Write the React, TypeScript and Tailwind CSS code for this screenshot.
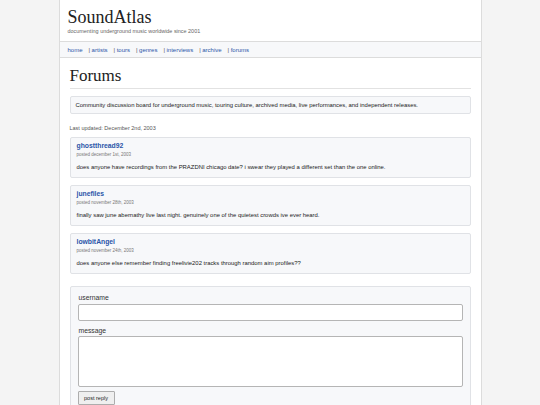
import React from "react";

const posts = [
  {
    user: "ghostthread92",
    date: "posted december 1st, 2003",
    body: "does anyone have recordings from the PRAZDNI chicago date? i swear they played a different set than the one online.",
  },
  {
    user: "junefiles",
    date: "posted november 28th, 2003",
    body: "finally saw june abernathy live last night. genuinely one of the quietest crowds ive ever heard.",
  },
  {
    user: "lowbitAngel",
    date: "posted november 24th, 2003",
    body: "does anyone else remember finding freelivie202 tracks through random aim profiles??",
  },
];

const navLinks = ["artists", "tours", "genres", "interviews", "archive", "forums"];

export default function App() {
  return (
    <div className="min-h-screen bg-[#f4f4f4] font-['Liberation_Sans',Arial,sans-serif] text-[#222]">
      <div className="mx-auto w-[423px] min-h-[405px] bg-white border-x border-[#dcdcdc]">
        {/* Header */}
        <header className="h-[42px] border-b border-[#dcdcdc] pl-[8px] pt-[8px]">
          <h1 className="font-['Liberation_Serif','Times_New_Roman',serif] text-[18px] leading-[18px] text-[#222]">
            SoundAtlas
          </h1>
          <p className="mt-[2px] text-[5.45px] leading-[7px] text-[#666]">
            documenting underground music worldwide since 2001
          </p>
        </header>

        {/* Nav */}
        <nav className="flex h-[16px] items-center gap-[6px] border-b border-[#dcdcdc] bg-[#f7f8fa] pl-[8px] text-[6px] leading-[8px] text-[#2a55a8]">
          <a href="#">home</a>
          {navLinks.map((l) => (
            <span key={l} className="flex items-center">
              <span className="mr-[1.5px] text-[#555]">|</span>
              <a href="#">{l}</a>
            </span>
          ))}
        </nav>

        <main className="px-[10px]">
          <h2 className="mt-[8px] border-b border-[#e2e2e2] pb-[2px] font-['Liberation_Serif','Times_New_Roman',serif] text-[17px] leading-[20px] text-[#222]">
            Forums
          </h2>

          <div className="mt-[7px] rounded-[2px] border border-[#e0e2e6] bg-[#f7f8fa] px-[5px] py-[4px] text-[5.9px] leading-[8px] text-[#222]">
            Community discussion board for underground music, touring culture, archived media, live performances, and independent releases.
          </div>

          <p className="mt-[11px] text-[5.5px] leading-[6px] text-[#555]">Last updated: December 2nd, 2003</p>

          <div className="mt-[5.5px] flex flex-col gap-[7px]">
            {posts.map((p) => (
              <div
                key={p.user}
                className="h-[41px] rounded-[2px] border border-[#e0e2e6] bg-[#f7f8fa] px-[6px] pt-[3px]"
              >
                <div className="text-[6.8px] font-bold leading-[9px] text-[#2a55a8]">{p.user}</div>
                <div className="mt-[2px] text-[4.5px] leading-[6px] text-[#777]">{p.date}</div>
                <div className="mt-[5px] text-[5.9px] leading-[8px] text-[#222]">{p.body}</div>
              </div>
            ))}
          </div>

          {/* Reply form */}
          <form className="mt-[12.5px] rounded-[2px] border border-[#e0e2e6] bg-[#f7f8fa] px-[7px] pb-[10px] pt-[7px]">
            <label className="block pl-[1px] text-[6.8px] leading-[8px] text-[#333]">username</label>
            <input
              type="text"
              className="mt-[2px] block h-[17px] w-full rounded-[2px] border border-[#b5b5b5] bg-white"
            />
            <label className="mt-[6px] block pl-[1px] text-[6.8px] leading-[8px] text-[#333]">message</label>
            <textarea className="mt-[1px] block h-[51px] w-full resize-none rounded-[2px] border border-[#b5b5b5] bg-white" />
            <button
              type="button"
              className="mt-[4px] block h-[14px] w-[37px] rounded-[1px] border border-[#adadad] bg-[#efefef] text-[5.5px] leading-[12px] text-[#222]"
            >
              post reply
            </button>
          </form>
        </main>
      </div>
    </div>
  );
}
